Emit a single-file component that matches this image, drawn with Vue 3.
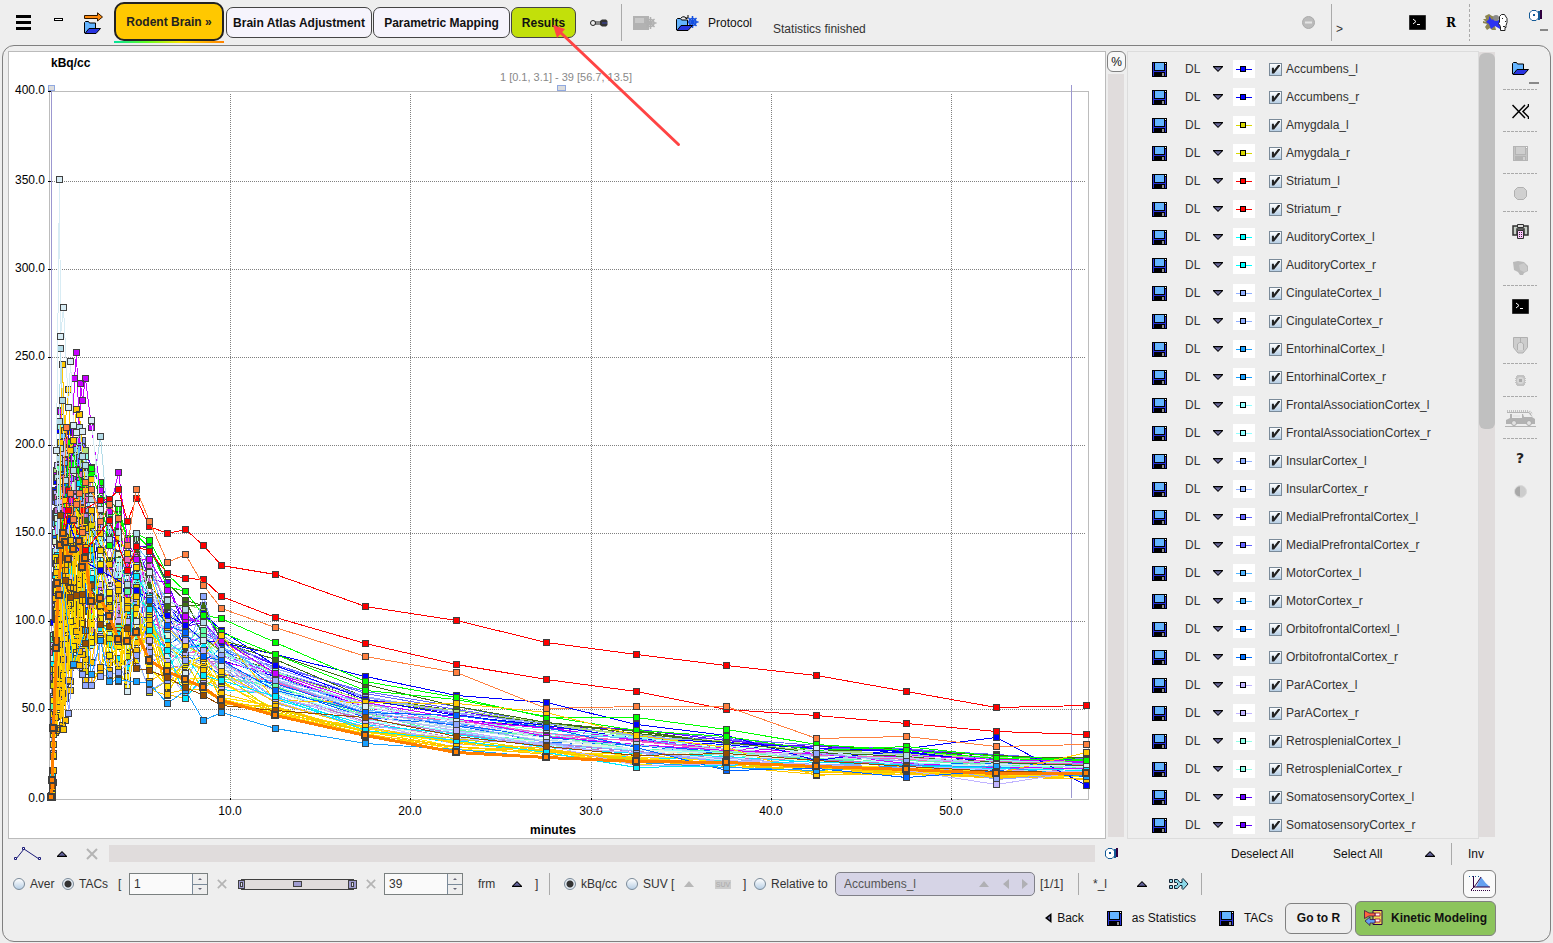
<script setup>
import { ref } from 'vue'

const regions = ref([
  ['Accumbens', '#0000ff'],
  ['Amygdala', '#d8d800'],
  ['Striatum', '#ff0000'],
  ['AuditoryCortex', '#00ffff'],
  ['CingulateCortex', '#90b0ff'],
  ['EntorhinalCortex', '#18a0ff'],
  ['FrontalAssociationCortex', '#90ffff'],
  ['InsularCortex', '#90b0ff'],
  ['MedialPrefrontalCortex', '#6464ff'],
  ['MotorCortex', '#50b4ff'],
  ['OrbitofrontalCortexl', '#0070ff', 'OrbitofrontalCortex'],
  ['ParACortex', '#c0b4ff'],
  ['RetrosplenialCortex', '#90ffe8'],
  ['SomatosensoryCortex', '#6400ff'],
].flatMap(([left, color, right]) => [
  { name: left + '_l', color, on: true },
  { name: (right || left) + '_r', color, on: true },
]))

const quantity = ref('kbq')
const mode = ref('tacs')
const from = ref(1)
const to = ref(39)

const frames = [51, 52, 53, 55, 56, 57, 59, 60, 62, 63, 65, 68, 70, 73, 76, 79, 82, 85, 91, 100, 109, 118, 127, 136, 149, 167, 185, 203, 221, 275, 365, 456, 546, 636, 726, 816, 906, 996, 1086]
const top = [795, 770, 620, 490, 470, 450, 430, 410, 425, 435, 430, 430, 425, 430, 430, 430, 440, 450, 465, 485, 500, 510, 545, 540, 545, 580, 600, 605, 625, 658, 690, 706, 719, 729, 738, 745, 748, 754, 757]
const bottom = [797, 797, 790, 735, 730, 728, 715, 728, 725, 680, 720, 680, 690, 665, 665, 665, 670, 680, 685, 672, 681, 682, 690, 665, 692, 695, 698, 690, 703, 714, 736, 750, 757, 764, 767, 772, 774, 778, 778]

let seed = 7
const rand = () => {
  seed = (seed * 16807) % 2147483647
  return seed / 2147483647
}

const palette = ['#6464ff', '#3c6e14', '#6400ff', '#90a8ff', '#b0e080', '#0000ff', '#c800ff', '#90ffe0', '#60b8ff', '#c0b4ff', '#f064c0', '#b4dce8', '#0064ff', '#60ffa8', '#90ffff', '#c070c8', '#e4f6d8', '#90a8ff', '#00e8ff', '#c0b4ff', '#ffe600', '#d8d800', '#ffc800', '#ffe600', '#ffc000']

function background(rank) {
  return frames.map((x, k) => {
    const early = x < 95
    const noise = early ? 0.8 : x < 150 ? 0.75 : x < 230 ? 0.5 : 0.24
    const spread = early ? 0.45 : x < 150 ? 0.55 : x < 230 ? 0.75 : 0.9
    const u = Math.min(1, Math.max(0, 0.5 + (rank - 0.5) * spread + (rand() - 0.5) * noise))
    return [x, Math.round(top[k] + (bottom[k] - top[k]) * u)]
  })
}

const tail = [149, 167, 185, 203, 221, 275, 365, 456, 546, 636, 726, 816, 906, 996, 1086]
const late = (ys) => ys.map((y, i) => [tail[tail.length - ys.length + i], y])
const rise = (x, y) => [[51, 797], [52, 785], [53, 730], [56, 640], [59, 560], [x, y]]

const named = [
  { color: '#0000ff', pts: [...rise(68, 520), [82, 560], [100, 570], [136, 590], ...late([600, 615, 625, 640, 642, 654, 676, 695, 702, 724, 735, 760, 748, 737, 785])] },
  { color: '#3c6e14', pts: [...rise(70, 500), [85, 520], [109, 560], [136, 549], ...late([585, 606, 605, 605, 640, 654, 684, 706, 722, 733, 742, 752, 756, 762, 765])] },
  { color: '#00ff00', pts: [...rise(67, 500), [71, 464], [76, 470], [85, 490], [91, 473], [100, 498], [109, 545], [118, 515], [127, 538], [136, 534], ...late([548, 586, 591, 615, 632, 654, 690, 699, 716, 730, 736, 750, 746, 756, 759])] },
  { color: '#00ff00', pts: [...rise(66, 480), [70, 442], [82, 490], [91, 468], [100, 482], [109, 519], [118, 508], [127, 538], [136, 533], ...late([540, 574, 591, 615, 618, 642, 681, 697, 717, 717, 729, 744, 750, 758, 760])] },
  { color: '#c800ff', pts: [...rise(65, 510), [70, 500], [74, 378], [76, 352], [79, 440], [80, 383], [82, 400], [85, 378], [91, 427], [100, 490], [109, 511], [118, 472], [127, 540], [136, 559], ...late([559, 590, 616, 622, 640, 673, 702, 718, 736, 744, 750, 753, 763, 767, 768])] },
  { color: '#ffc800', pts: [...rise(60, 442), [62, 364], [64, 430], [68, 389], [70, 450], [73, 440], [76, 409], [79, 414], [85, 490], [91, 479], [100, 533], [109, 564], [118, 537], [127, 553], [136, 567], ...late([573, 627, 645, 655, 635, 700, 702, 703, 712, 735, 747, 775, 770, 773, 752])] },
  { color: '#ffc800', pts: [...rise(63, 729), [65, 500], [73, 520], [82, 600], [91, 510], [100, 550], [118, 590], [136, 608], ...late([625, 645, 660, 670, 680, 714, 726, 743, 750, 758, 766, 774, 774, 775, 779])] },
  { color: '#b4dce8', pts: [...rise(59, 421), [60, 348], [62, 400], [65, 480], [73, 470], [79, 427], [82, 456], [85, 465], [91, 499], [100, 436], [109, 539], [118, 532], [127, 584], [136, 533], ...late([598, 600, 609, 622, 650, 680, 710, 728, 740, 744, 755, 751, 755, 763, 767])] },
  { color: '#d8ecf4', pts: [...rise(56, 450), [59, 179], [60, 336], [63, 307], [68, 407], [70, 361], [73, 425], [76, 432], [82, 431], [91, 420], [100, 509], [118, 503], [127, 691], [136, 621], ...late([572, 655, 673, 640, 665, 690, 706, 721, 738, 749, 760, 748, 767, 764, 766])] },
  { color: '#90a8ff', pts: [...rise(68, 713), [73, 665], [82, 674], [85, 685], [91, 685], [100, 676], [109, 674], [118, 672], [136, 655], ...late([690, 680, 660, 596, 655, 680, 712, 724, 742, 751, 762, 753, 761, 779, 772])] },
  { color: '#c0b4ff', pts: late([640, 650, 640, 650, 660, 698, 715, 730, 745, 765, 764, 765, 770, 784, 770]) },
  { color: '#0064ff', pts: late([600, 625, 632, 656, 660, 690, 712, 715, 727, 747, 770, 768, 777, 770, 776]) },
  { color: '#00e8ff', pts: late([630, 650, 698, 675, 680, 696, 730, 740, 752, 767, 765, 760, 765, 768, 770]) },
  { color: '#18a0ff', pts: [...rise(73, 664), [85, 630], [91, 674], [100, 640], [109, 681], [118, 680], [136, 681], ...late([683, 703, 690, 720, 712, 728, 743, 749, 757, 762, 767, 770, 765, 766, 776])] },
  { color: '#ff0000', pts: [...rise(68, 510), [85, 550], [109, 520], [127, 570], [136, 546], ...late([551, 573, 578, 579, 596, 617, 643, 664, 679, 691, 709, 715, 723, 731, 734])] },
  { color: '#ff0000', pts: [...rise(68, 490), [82, 510], [100, 500], [109, 499], [118, 489], [127, 521], [136, 498], ...late([526, 533, 529, 545, 565, 574, 606, 620, 642, 654, 665, 675, 691, 707, 705])] },
  { color: '#ff8040', pts: [...rise(66, 427), [70, 493], [73, 519], [76, 504], [79, 493], [82, 532], [85, 482], [91, 489], [100, 521], [109, 504], [118, 518], [127, 545], [136, 489], ...late([521, 562, 554, 585, 608, 627, 656, 672, 708, 706, 706, 738, 736, 746, 744])] },
  { color: '#964b00', pts: [...rise(60, 515), [65, 580], [70, 597], [76, 595], [82, 594], [85, 643], [91, 585], [100, 624], [109, 626], [127, 628], [136, 668], ...late([670, 677, 687, 695, 705, 710, 717, 736, 746, 755, 753, 760, 766, 771, 772])] },
  { color: '#ff8000', wide: true, pts: [[51, 797], [52, 780], [53, 728], [56, 648], [57, 583], [59, 595], [60, 545], [63, 533], [65, 542], [68, 559], [73, 549], [79, 541], [82, 567], [85, 558], [91, 601], [100, 598], [109, 616], [118, 639], [127, 641], [136, 632], ...late([660, 671, 679, 687, 700, 715, 735, 752, 757, 761, 762, 766, 769, 773, 773])] },
]

const count = 50
const curves = [
  ...Array.from({ length: count }, (_, i) => ({ color: palette[Math.floor(i / 2)], pts: background(i / (count - 1)) })),
  ...named,
].map((c) => ({
  ...c,
  line: c.pts.map(([x, y]) => `${x + 0.5},${y + 0.5}`).join(' '),
  marks: c.pts.map(([x, y]) => (c.wide ? `M${x - 3} ${y - 3}h6v6h-6z` : `M${x - 2.5} ${y - 2.5}h6v6h-6z`)).join(''),
}))

const yTicks = [0, 50, 100, 150, 200, 250, 300, 350, 400].map((v) => ({ label: v.toFixed(1), y: v === 400 ? 91 : 797 - Math.round(v * 1.76), grid: v > 0 && v < 400 }))
const xTicks = [10, 20, 30, 40, 50].map((v) => ({ label: v.toFixed(1), x: Math.round(50 + v * 18.02) }))

const rail = [
  { id: 'folder', w: 17, h: 13, size: 44, rule: true, label: 'Open' },
  { id: 'close', w: 17, h: 15, size: 42, rule: true, label: 'Close all' },
  { id: 'disk-off', w: 15, h: 15, size: 42, rule: true, label: 'Save' },
  { id: 'blob', w: 13, h: 13, size: 38, rule: true, label: 'Volume' },
  { id: 'printer', w: 17, h: 15, size: 38, label: 'Report' },
  { id: 'patch', w: 15, h: 14, size: 36, rule: true, label: 'Surface' },
  { id: 'term', w: 17, h: 15, size: 40, label: 'Console' },
  { id: 'shield', w: 15, h: 17, size: 38, rule: true, label: 'Segment' },
  { id: 'spot', w: 11, h: 11, size: 33, rule: true, label: 'Target' },
  { id: 'jeep', w: 31, h: 17, size: 42, rule: true, label: 'Transport' },
  { id: 'help', size: 38, label: 'Help' },
  { id: 'half', w: 13, h: 13, size: 28, label: 'Contrast' },
]
</script>

<template>
  <div class="app">
    <svg class="defs" width="0" height="0" aria-hidden="true">
      <symbol id="disk" viewBox="0 0 15 15"><g shape-rendering="crispEdges"><path d="M0 0h15v15H0z" fill="#000" /><path d="M1 1h1v13H1zM13 3h1v11h-1zM2 9h11v1H2z" fill="#2834d8" /><path d="M3 1h9v7H3z" fill="#64b4ff" /><path d="M13 1h1v1h-1z" fill="#fff" /><path d="M10 11h2v3h-2z" fill="#909090" /></g></symbol>
      <symbol id="disk-off" viewBox="0 0 15 15"><g shape-rendering="crispEdges"><path d="M0 0h15v15H0z" fill="#b4b4b4" /><path d="M1 1h1v13H1zM13 3h1v11h-1zM2 9h11v1H2z" fill="#c4c4c4" /><path d="M3 1h9v7H3z" fill="#cecece" /><path d="M13 1h1v1h-1z" fill="#fff" /><path d="M10 11h2v3h-2z" fill="#d0d0d0" /></g></symbol>
      <symbol id="folder" viewBox="0 0 17 13"><path d="M.5 12V1.500L1.500.5h3l1 1.500h6V7" fill="#64b4ff" stroke="#000" /><path d="M1 12.500 5 7.500h11.500L12 12.500z" fill="#2834e0" stroke="#000" /></symbol>
      <symbol id="close" viewBox="0 0 17 15"><path d="M.5 1 13 14M.5 14 13 1M16.500 0v2L11 7.500 16.500 13v2" fill="none" stroke="#000" stroke-width="1.500" /></symbol>
      <symbol id="blob" viewBox="0 0 13 13"><path d="M3.500.5h6l3 3v6l-3 3h-6l-3-3v-6z" fill="#d0d0d0" stroke="#b0b0b0" /></symbol>
      <symbol id="printer" viewBox="0 0 17 15"><path d="M1 2h15v9h-4V5H5v6H1z" fill="#c8d0c8" stroke="#303030" stroke-width="1.500" /><path d="M5.500.5h6v3h-6z" fill="#ddd" stroke="#303030" /><path d="M5.500 6.500h6v8h-6z" fill="#ffc8ff" stroke="#303030" /><path d="M7 8.500h1m1 0h1m-3 2h1m1 0h1m-3 2h1m1 0h1" stroke="#303030" /></symbol>
      <symbol id="patch" viewBox="0 0 15 14"><path d="M0 1 5 0l6 1 4 4v5l-4 2-1 2H7l-2-3-4-2z" fill="#bababa" /><path d="m6 4 5-2 3 4v4l-3 1-4-2z" fill="#cacaca" /></symbol>
      <symbol id="term" viewBox="0 0 17 15"><path d="M.5.500h16v14H.5z" fill="#000" stroke="#303030" /><path d="m4 4 3 2.500L4 9m4 .5h3" fill="none" stroke="#fff" /></symbol>
      <symbol id="shield" viewBox="0 0 15 17"><path d="M.5.500h14v10L10 16H5L.5 10.500z" fill="#cdcdcd" stroke="#b0b0b0" /><path d="M7.500 1v4M4.500 13V7l2-1.500h2l2 1.500v6" fill="#dadada" stroke="#b0b0b0" /></symbol>
      <symbol id="spot" viewBox="0 0 11 11"><path d="M2 0h7v1h1v2h1v1h-1v1h1v1h-1v1h1v1h-1v2H9v1H2v-1H1V8H0V7h1V6H0V5h1V4H0V3h1V1h1z" fill="#c2c2c2" /><circle cx="5.500" cy="5.500" r="3.500" fill="#d6d6d6" /><path d="M4 4h3v3H4z" fill="#aaa" /></symbol>
      <symbol id="jeep" viewBox="0 0 31 17"><path d="M2 1.500h22l3 3" fill="none" stroke="#c0c0c0" stroke-width="3" stroke-dasharray="1 1" /><path d="M2 2.500h22l3 4" fill="none" stroke="#b4b4b4" /><path d="M5 4h2v4h10V4h1l1 3h8l3 2v5H1v-4l4-2z" fill="#b2b2b2" /><path d="M8 5h7v2H8z" fill="#e6e6e6" /><circle cx="9" cy="13" r="2.500" fill="#e2e2e2" stroke="#aaa" /><circle cx="24" cy="13" r="2.500" fill="#e2e2e2" stroke="#aaa" /><path d="M0 16.500h31" stroke="#b4b4b4" /></symbol>
      <symbol id="half" viewBox="0 0 13 13"><circle cx="6.500" cy="6.500" r="6" fill="#ccc" stroke="#d8d8d8" /><path d="M6 1.500a5 5 0 0 0 0 10z" fill="#a8a8a8" /></symbol>
      <symbol id="up" viewBox="0 0 10 6"><path d="M5 0 10 5v1H0V5z" fill="#000" /><path d="M5 1.200 8.500 4.800h-7z" fill="#62629a" /></symbol>
      <symbol id="up-off" viewBox="0 0 10 6"><path d="M5 0 10 6H0z" fill="#b8b8b8" /></symbol>
      <symbol id="down" viewBox="0 0 10 6"><path d="M0 0h10v1L5 6 0 1z" fill="#000" /><path d="M1.500 1.200h7L5 4.800z" fill="#6a6a9c" /></symbol>
      <symbol id="cross" viewBox="0 0 12 12"><path d="m1 1 10 10M11 1 1 11" stroke="#b4b4b4" stroke-width="2" /></symbol>
      <symbol id="camera" viewBox="0 0 13 11"><path d="M3 .5h4L9.500 3v5L7 10.500H3L.5 8V3z" fill="#fff" stroke="#145a96" /><path d="M4 4h2v2H4z" fill="#145a96" /><path d="M9 1h2v9H9z" fill="#145a96" /><path d="M11 1.500V0h2v9h-2z" fill="#300040" /></symbol>
      <symbol id="gear" viewBox="0 0 12 12"><path d="M6 0v12M0 6h12M2 2l8 8M10 2l-8 8" stroke="currentColor" stroke-width="1.500" /><circle cx="6" cy="6" r="3.500" fill="none" stroke="currentColor" stroke-width="1.500" /></symbol>
    </svg>

    <header class="toolbar">
      <button class="tool w32" aria-label="Menu"><svg width="15" height="15" shape-rendering="crispEdges"><path d="M0 0h15v3H0zM0 6h15v3H0zM0 12h15v3H0z" /></svg></button>
      <button class="tool w32 raised" aria-label="Collapse"><svg width="9" height="3" shape-rendering="crispEdges"><path d="M.5.500h8v2h-8z" fill="#fff" stroke="#000" /></svg></button>
      <button class="tool w40" aria-label="Open next"><svg width="20" height="22" viewBox="0 0 20 22"><path d="M.5 3.500h13V.8L18.500 5l-5 4V6.500H.5z" fill="#ff8c10" stroke="#301800" /><use href="#folder" x="0" y="9" width="17" height="13" /></svg></button>
      <div class="current"><button class="tab active">Rodent Brain »</button></div>
      <button class="tab t2">Brain Atlas Adjustment</button>
      <button class="tab t3">Parametric Mapping</button>
      <button class="tab t4">Results</button>
      <button class="tool w45" aria-label="Link"><svg width="18" height="8" viewBox="0 0 18 8"><circle cx="3" cy="4" r="2.500" fill="none" stroke="#222" /><path d="M5 3h6M5 5h6" stroke="#222" /><path d="M10 2 12 .5h4L17.500 2v4L16 7.500h-4L10 6z" fill="#333" /><path d="M12 4h5" stroke="#3c46b4" /></svg></button>
      <i class="sep"></i>
      <button class="tool w45 gray" disabled aria-label="Save protocol"><svg width="24" height="16" viewBox="0 0 24 16"><path d="M0 1h16v14H0z" fill="#b2b2b2" /><path d="M2 3h9v5H2z" fill="#c8c8c8" /><use href="#gear" x="11" y="2" width="13" height="12" /></svg></button>
      <button class="tool protocol"><svg width="23" height="16" viewBox="0 0 23 16"><g color="#1450e0"><use href="#gear" x="10" y="1" width="13" height="12" /></g><use href="#folder" x="0" y="3" width="17" height="13" /><path d="M5 3q3-3 6 1m-2-1h3V0" fill="none" stroke="#000" /></svg><span>Protocol</span></button>
      <span class="status">Statistics finished</span>
      <button class="tool w46" disabled aria-label="Stop"><svg width="13" height="13" viewBox="0 0 13 13"><circle cx="6.500" cy="6.500" r="6" fill="#bbb" stroke="#aaa" /><path d="M3 5.500h7v2H3z" fill="#e4e4e4" /></svg></button>
      <i class="sep"></i>
      <span class="prompt">&gt;</span>
      <button class="tool w32" aria-label="Console"><svg width="17" height="15"><use href="#term" /></svg></button>
      <button class="tool w36 r">R</button>
      <i class="sep dashed"></i>
      <button class="tool w50" aria-label="Brain tools"><svg width="25" height="18" viewBox="0 0 25 18"><path d="M0 5h3L2 2l4-2 3 2 4 1v3h2v4l-3 2 1 4H9l-2-2-3 2-2-3 2-3-4-1V7l3 1z" fill="#8c8450" /><path d="m6 2 3 4 3-3 2 4 3-2v10l-5-3-4 3-2-5-3-2 3-3z" fill="#2c32f0" /><circle cx="13" cy="4" r="3" fill="#8a8a8a" /><path d="M16.500 8V2.500l2-2h3l2.500 4v4l-1 3v2h-1v3h-4.500v-4l-2-3z" fill="#fff" stroke="#222" /><path d="M19 4.500h1M22 7.500h1M20 12.500h2" stroke="#222" /></svg></button>
      <button class="tool cam" aria-label="Capture"><svg width="13" height="11"><use href="#camera" /></svg><i class="dash"></i></button>
    </header>

    <main class="panel">
      <div class="body">
        <section class="workspace">
          <div class="chart">
            <svg viewBox="9 52 1096 786" role="img" aria-label="Time activity curves">
              <g shape-rendering="crispEdges" fill="none">
                <path d="M49.500 91.500H1088.500V799.500H49.500z" stroke="#bcbcbc" />
                <path v-for="t in yTicks.filter((t) => t.grid)" :key="'g' + t.label" :d="`M52 ${t.y + 0.5}H1085`" stroke="#808080" stroke-dasharray="1 1" />
                <path v-for="t in xTicks" :key="'g' + t.label" :d="`M${t.x + 0.5} 94V798`" stroke="#808080" stroke-dasharray="1 1" />
                <path v-for="t in yTicks" :key="'t' + t.label" :d="`M48 ${t.y + 0.5}h3`" stroke="#000" />
                <path v-for="t in xTicks" :key="'t' + t.label" :d="`M${t.x + 0.5} 798v2`" stroke="#000" />
                <path d="M51.500 91V798M1071.500 85V798" stroke="#9c98d0" />
                <path d="M48.500 85.500h6v5h-6zM557.500 85.500h8v5h-8z" fill="#dcdcdc" stroke="#90a8e0" />
                <g v-for="(c, i) in curves" :key="i">
                  <polyline :points="c.line" :stroke="c.color" :stroke-width="c.wide ? 3 : 1" />
                  <path :d="c.marks" :fill="c.color" stroke="#404040" :stroke-width="c.wide ? 2 : 1" />
                </g>
              </g>
              <text class="strong" x="51" y="67">kBq/cc</text>
              <text class="strong" x="530" y="834">minutes</text>
              <text v-for="t in yTicks" :key="t.label" x="45" :y="t.y + (t.label === '0.0' ? 5 : 3)" text-anchor="end">{{ t.label }}</text>
              <text v-for="t in xTicks" :key="t.label" :x="t.x" y="815" text-anchor="middle">{{ t.label }}</text>
              <text class="range" x="566" y="81" text-anchor="middle">1 [0.1, 3.1] - 39 [56.7, 13.5]</text>
            </svg>
          </div>
          <div class="zoomer"><button aria-label="Percent">%</button><i></i></div>
          <div class="list">
            <div v-for="r in regions" :key="r.name" class="row">
              <button class="plain" :aria-label="'Save ' + r.name"><svg width="15" height="15"><use href="#disk" /></svg></button>
              <span class="dl">DL</span>
              <button class="plain" :aria-label="'Style ' + r.name"><svg width="10" height="6"><use href="#down" /></svg></button>
              <svg class="swatch" width="22" height="18" shape-rendering="crispEdges"><path d="M3 9.500h16" :stroke="r.color" /><path d="M7.500 6.500h5v5h-5z" :fill="r.color" stroke="#000" /></svg>
              <label><input v-model="r.on" type="checkbox" /><span>{{ r.name }}</span></label>
            </div>
          </div>
          <div class="scroll"><i></i></div>
        </section>

        <div class="line first">
          <button class="tool w40" aria-label="Curve"><svg width="28" height="14" viewBox="0 0 28 14"><path d="M2 12 10 2l15 10" fill="none" stroke="#1a1a78" /><path d="M.5 10.500h2v2h-2zM8.500.500h2v2h-2zM24.500 10.500h2v2h-2z" fill="#fff" stroke="#1a1a78" /></svg></button>
          <button class="tool w28" aria-label="More curves"><svg width="10" height="6"><use href="#up" /></svg></button>
          <button class="tool w32" disabled aria-label="Remove"><svg width="12" height="12"><use href="#cross" /></svg></button>
          <i class="track"></i>
          <button class="tool w32" aria-label="Capture"><svg width="13" height="11"><use href="#camera" /></svg></button>
          <div class="picks">
            <button class="text">Deselect All</button>
            <button class="text">Select All</button>
            <button class="tool" aria-label="More selections"><svg width="10" height="6"><use href="#up" /></svg></button>
            <i class="sep"></i>
            <button class="text">Inv</button>
          </div>
        </div>

        <div class="line second">
          <label class="opt w49 lead"><input v-model="mode" type="radio" value="aver" />Aver</label>
          <label class="opt w56"><input v-model="mode" type="radio" value="tacs" />TACs</label>
          <span class="w11">[</span>
          <div class="spin"><input v-model="from" aria-label="First frame" /><span><button aria-label="First up"><b class="su"></b></button><button aria-label="First down"><b class="sd"></b></button></span></div>
          <button class="tool w28" disabled aria-label="Reset first"><svg width="10" height="10"><use href="#cross" /></svg></button>
          <div class="dual">
            <svg viewBox="0 0 119 11" shape-rendering="crispEdges"><path d="M3.500.500h112v10H3.500z" fill="#e0dcdc" stroke="#404040" /><path d="M.5 1.500h6v8h-6zM110.500 1.500h8v8h-8zM55.500 2.500h8v5h-8z" fill="#a09cd0" stroke="#404040" /><path d="M2.500 3.500h2v4h-2zM113.500 3.500h2v4h-2z" fill="#dcdcf0" stroke="#404040" /></svg>
            <input type="range" min="1" max="39" v-model="from" aria-label="Frame range start" />
            <input type="range" min="1" max="39" v-model="to" aria-label="Frame range end" />
          </div>
          <button class="tool w26" disabled aria-label="Reset last"><svg width="10" height="10"><use href="#cross" /></svg></button>
          <div class="spin"><input v-model="to" aria-label="Last frame" /><span><button aria-label="Last up"><b class="su"></b></button><button aria-label="Last down"><b class="sd"></b></button></span></div>
          <span class="frm">frm</span>
          <button class="tool w28" aria-label="Frame units"><svg width="10" height="6"><use href="#up" /></svg></button>
          <span class="close">]</span>
          <i class="sep spaced"></i>
          <label class="opt w62"><input v-model="quantity" type="radio" value="kbq" />kBq/cc</label>
          <label class="opt w49"><input v-model="quantity" type="radio" value="suv" />SUV [</label>
          <button class="tool w28" disabled aria-label="SUV type"><svg width="10" height="6"><use href="#up-off" /></svg></button>
          <button class="tool w40" disabled><span class="suv">SUV</span></button>
          <span class="w11">]</span>
          <label class="opt w81"><input v-model="quantity" type="radio" value="rel" />Relative to</label>
          <div class="combo">
            <select disabled aria-label="Reference region"><option>Accumbens_l</option></select>
            <svg width="50" height="10" viewBox="0 0 50 10"><path d="M0 8 5 2l5 6zM30 0v10l-6-5zM43 0v10l6-5z" fill="#b0b0b4" /></svg>
          </div>
          <span class="page">[1/1]</span>
          <i class="sep"></i>
          <span class="mask">*_l</span>
          <button class="tool w28" aria-label="Filters"><svg width="10" height="6"><use href="#up" /></svg></button>
          <button class="tool w45" aria-label="Merge"><svg width="20" height="12" viewBox="0 0 20 12"><path d="M.5 1.500h3v3h-3zM.5 7.500h3v3h-3z" fill="#8cd8e8" stroke="#123" /><path d="M5.500 1.500h3L11 4.500h2V1.500l1-1L19 6l-5 5.500-1-1v-3h-2l-2.500 3h-3v-3h2L9 6 7.500 4.500h-2z" fill="#8cd8e8" stroke="#123" /></svg></button>
          <i class="sep"></i>
          <button class="plot" aria-label="Curve plot"><svg width="21" height="17" viewBox="0 0 21 17"><path d="M7 11 12 1q4 6 9 10z" fill="#64a0f0" /><path d="M4.500 0v11H21" fill="none" stroke="#300040" /><path d="m2 14 3-3 3-4 4-6" fill="none" stroke="#300040" /><path d="M0 .5h12" stroke="#145a96" stroke-dasharray="1 2" /><path d="M2 14.500h19" stroke="#300040" stroke-dasharray="1 1" /></svg></button>
        </div>

        <div class="line third">
          <button class="text"><svg width="7" height="10" viewBox="0 0 7 10"><path d="M6.500 0v10L0 5z" fill="#000" /><path d="M5 3v4L2.500 5z" fill="#6a6a9c" /></svg>Back</button>
          <button class="text wide"><svg width="15" height="15"><use href="#disk" /></svg>as Statistics</button>
          <button class="text wide last"><svg width="15" height="15"><use href="#disk" /></svg>TACs</button>
          <button class="go">Go to R</button>
          <button class="kinetic"><svg width="19" height="16" viewBox="0 0 19 16"><path d="M9 .5h9v14H9z" fill="#e8dc50" stroke="#300040" /><path d="M11 3h5v3h-5zM11 9h5v3h-5z" fill="#fff" stroke="#b42040" /><path d="M.5.500 5 3h6v3H5L.5 8.500z" fill="#ff6440" stroke="#300040" stroke-width=".7" /><path d="m1 11 5-4v2.500h5V13H6v2.500z" fill="#64a0f0" stroke="#300040" stroke-width=".7" /></svg>Kinetic Modeling</button>
        </div>
      </div>

      <nav class="rail">
        <button v-for="b in rail" :key="b.id" :class="['cell', 's' + b.size, { rule: b.rule, more: b.id === 'folder' }]" :aria-label="b.label">
          <b v-if="b.id === 'help'">?</b>
          <svg v-else :width="b.w" :height="b.h"><use :href="'#' + b.id" /></svg>
        </button>
      </nav>
    </main>

    <svg class="arrow" width="140" height="130" viewBox="545 20 140 130"><path d="M678.500 144.500 561 33" stroke="#ff4444" stroke-width="3" stroke-linecap="round" /><path d="m553 25 12 4-8 9z" fill="#ff4444" /></svg>
  </div>
</template>

<style>
body {
  background: #eee;
}
</style>

<style scoped>
.app {
  position: relative;
  display: flex;
  flex-direction: column;
  min-height: 100vh;
  box-sizing: border-box;
  padding: 0 2px 2px;
  background: #eee;
  color: #333;
  font: 12px/16px "Liberation Sans", Arial, sans-serif;
}
.app *, .app *::after { box-sizing: border-box; }
.defs { position: absolute; }
svg { display: block; flex: none; }
button {
  margin: 0;
  padding: 0;
  border: 0;
  background: none;
  color: #111;
  font: inherit;
  white-space: nowrap;
}
.toolbar {
  display: flex;
  align-items: center;
  height: 45px;
  padding-left: 5px;
}
.tool {
  flex: none;
  display: flex;
  align-items: center;
  justify-content: center;
  height: 28px;
}
.w26 { width: 26px; }
.w28 { width: 28px; }
.w32 { width: 32px; }
.w36 { width: 36px; }
.w40 { width: 40px; }
.w45 { width: 45px; }
.w46 { width: 46px; }
.w50 { width: 50px; }
.raised { margin-left: 3px; padding-bottom: 6px; }
.gray { color: #b0b0b0; }
.current {
  margin-right: 2px;
  border-bottom: 2px solid;
  border-image: linear-gradient(90deg, #00e0a0, #60ff20 30%, #ffe600 60%, #ff8000) 1;
}
.tab {
  flex: none;
  height: 31px;
  border: 1px solid #444;
  border-radius: 7px;
  background: #f6f4fc;
  font-weight: bold;
}
.tab + .tab { margin-left: 1px; }
.active {
  display: block;
  width: 110px;
  height: 39px;
  border: 2px solid #222;
  border-radius: 10px;
  background: #ffc800;
  color: #222;
}
.t2 { width: 146px; }
.t3 { width: 137px; }
.t4 { width: 65px; background: #c2e00a; }
.sep { flex: none; width: 1px; height: 37px; background: #aaa; }
.dashed { background: repeating-linear-gradient(#aaa 0 3px, transparent 3px 5px); }
.protocol { gap: 9px; margin-left: 9px; }
.status { flex: 1; padding: 12px 0 0 21px; }
.prompt { width: 69px; padding: 12px 0 0 4px; }
.r { color: #000; font: bold 12px/16px "DejaVu Serif", serif; }
.cam { position: relative; width: 30px; padding: 0 0 14px; margin-right: 1px; }
.dash { position: absolute; right: 2px; bottom: 6px; width: 8px; height: 2px; background: #888; }
.panel {
  flex: 1;
  display: flex;
  border: 1px solid #808080;
  border-radius: 12px;
}
.body { flex: 1; min-width: 0; padding: 5px 0 5px 5px; }
.workspace { display: flex; padding-right: 1px; }
.chart { flex: 1; min-width: 0; border: 1px solid #bbb; background: #fff; }
.chart svg { width: 100%; height: auto; }
.chart text { fill: #000; font: 12px "Liberation Sans", Arial, sans-serif; }
.chart .strong { font-weight: bold; }
.chart .range { fill: #888; font-size: 11px; }
.zoomer { width: 19px; margin: 0 1px; display: flex; flex-direction: column; }
.zoomer button {
  height: 21px;
  border: 1px solid #808080;
  border-radius: 6px;
  background: #f8f8f8;
}
.zoomer i { flex: 1; margin: 2px 2px 2px 1px; background: #e0dcdc; }
.list {
  contain: size;
  width: 352px;
  padding-top: 3px;
  border: 1px solid #dcdcdc;
  overflow: hidden;
}
.row {
  display: grid;
  grid-template-columns: 33px 28px 20px 36px 1fr;
  align-items: center;
  height: 28px;
  padding-left: 24px;
}
.row label { display: flex; align-items: center; gap: 4px; }
.row input {
  appearance: none;
  width: 13px;
  height: 13px;
  margin: 0;
  border: 1px solid #7a8a99;
  background: linear-gradient(#fff, #b8cfe5);
}
.row input:checked::after {
  content: "";
  display: block;
  width: 9px;
  height: 9px;
  margin: 1px;
  background: #222;
  clip-path: polygon(10% 35%, 32% 35%, 34% 60%, 82% 0, 100% 0, 100% 18%, 34% 100%, 10% 100%);
}
.swatch { background: #fff; }
.scroll { width: 16px; margin: 1px 0 2px; padding: 1px 0; background: #e0dcdc; }
.scroll i { display: block; height: 48%; border-radius: 6px; background: #c0c0c0; }
.line { display: flex; align-items: center; }
.line .sep { height: 22px; }
.first { height: 29px; }
.track { flex: 1; height: 17px; margin-left: 1px; background: #e0dcdc; }
.picks {
  display: grid;
  grid-template-columns: 102px 81px 32px 5px 1fr;
  align-items: center;
  width: 265px;
  margin-left: 104px;
}
.picks .text { text-align: left; }
.picks .text:last-child { padding-left: 17px; }
.picks .sep { margin-left: 5px; }
.second { height: 32px; }
.opt { flex: none; display: flex; align-items: center; gap: 5px; white-space: nowrap; }
.opt input {
  appearance: none;
  flex: none;
  width: 12px;
  height: 12px;
  margin: 0;
  border: 1px solid #7a8a99;
  border-radius: 50%;
  background: linear-gradient(#fff, #b8cfe5);
}
.opt input:checked { background: radial-gradient(circle, #333 3px, #e4ecf4 4px); }
.lead { margin-left: 5px; }
.w11 { width: 11px; }
.w49 { width: 49px; }
.w56 { width: 56px; }
.w62 { width: 62px; }
.w81 { width: 81px; }
.spin { flex: none; display: flex; width: 79px; height: 22px; border: 1px solid #7a8080; background: #fafafa; }
.spin input { width: 62px; padding: 0 4px; border: 0; background: none; color: #333; font: inherit; }
.spin span { flex: 1; display: flex; flex-direction: column; border-left: 1px solid #7a8a99; background: #eee; }
.spin button { flex: 1; display: grid; place-items: center; }
.spin button + button { border-top: 1px solid #7a8a99; }
.su, .sd { border: 2px solid transparent; }
.su { border-top: 0; border-bottom-color: #667; }
.sd { border-bottom: 0; border-top-color: #667; }
.dual { position: relative; flex: none; width: 119px; margin: 0 1px 0 2px; }
.dual input { position: absolute; inset: 0; width: 100%; height: 11px; margin: 0; opacity: 0; pointer-events: none; }
.frm { width: 40px; padding-left: 15px; }
.close { width: 18px; padding-left: 4px; }
.line .spaced { margin-right: 14px; }
.suv { padding: 0 1px; background: #ccc; color: #aaa; font-size: 7px; line-height: 9px; }
.combo { position: relative; flex: none; width: 200px; height: 24px; }
.combo select {
  appearance: none;
  width: 100%;
  height: 100%;
  padding: 0 8px;
  border: 1px solid #808088;
  border-radius: 5px;
  background: #d6d4e6;
  color: #555;
  font: inherit;
  opacity: 1;
}
.combo svg { position: absolute; right: 6px; top: 7px; }
.page { width: 43px; padding-left: 5px; }
.mask { width: 49px; padding-left: 14px; }
.plot {
  display: grid;
  place-items: center;
  width: 33px;
  height: 28px;
  margin-left: auto;
  border: 1px solid #808080;
  border-radius: 6px;
  background: #fafafa;
}
.third { justify-content: flex-end; gap: 3px; height: 36px; }
.third .text { display: flex; align-items: center; gap: 5px; margin-right: 20px; }
.third .wide { gap: 10px; }
.third .last { margin-right: 9px; }
.go, .kinetic { border: 1px solid #808080; border-radius: 6px; font-weight: bold; }
.go { width: 67px; height: 31px; }
.kinetic { display: flex; align-items: center; justify-content: center; gap: 8px; width: 141px; height: 35px; background: #8cc45c; }
.rail { width: 54px; }
.cell { position: relative; display: flex; align-items: center; justify-content: center; width: 48px; }
.cell b { color: #222; font: bold 14px/16px "DejaVu Sans", sans-serif; }
.rule::after {
  content: "";
  position: absolute;
  left: 7px;
  bottom: 0;
  width: 34px;
  height: 1px;
  background: repeating-linear-gradient(90deg, #aaa 0 3px, transparent 3px 4px);
}
.more::before { content: ""; position: absolute; right: 5px; bottom: 6px; width: 10px; height: 2px; background: #888; }
.s28 { height: 28px; }
.s33 { height: 33px; }
.s36 { height: 36px; }
.s38 { height: 38px; }
.s40 { height: 40px; }
.s42 { height: 42px; }
.s44 { height: 44px; }
.arrow { position: absolute; left: 545px; top: 20px; pointer-events: none; }
</style>
